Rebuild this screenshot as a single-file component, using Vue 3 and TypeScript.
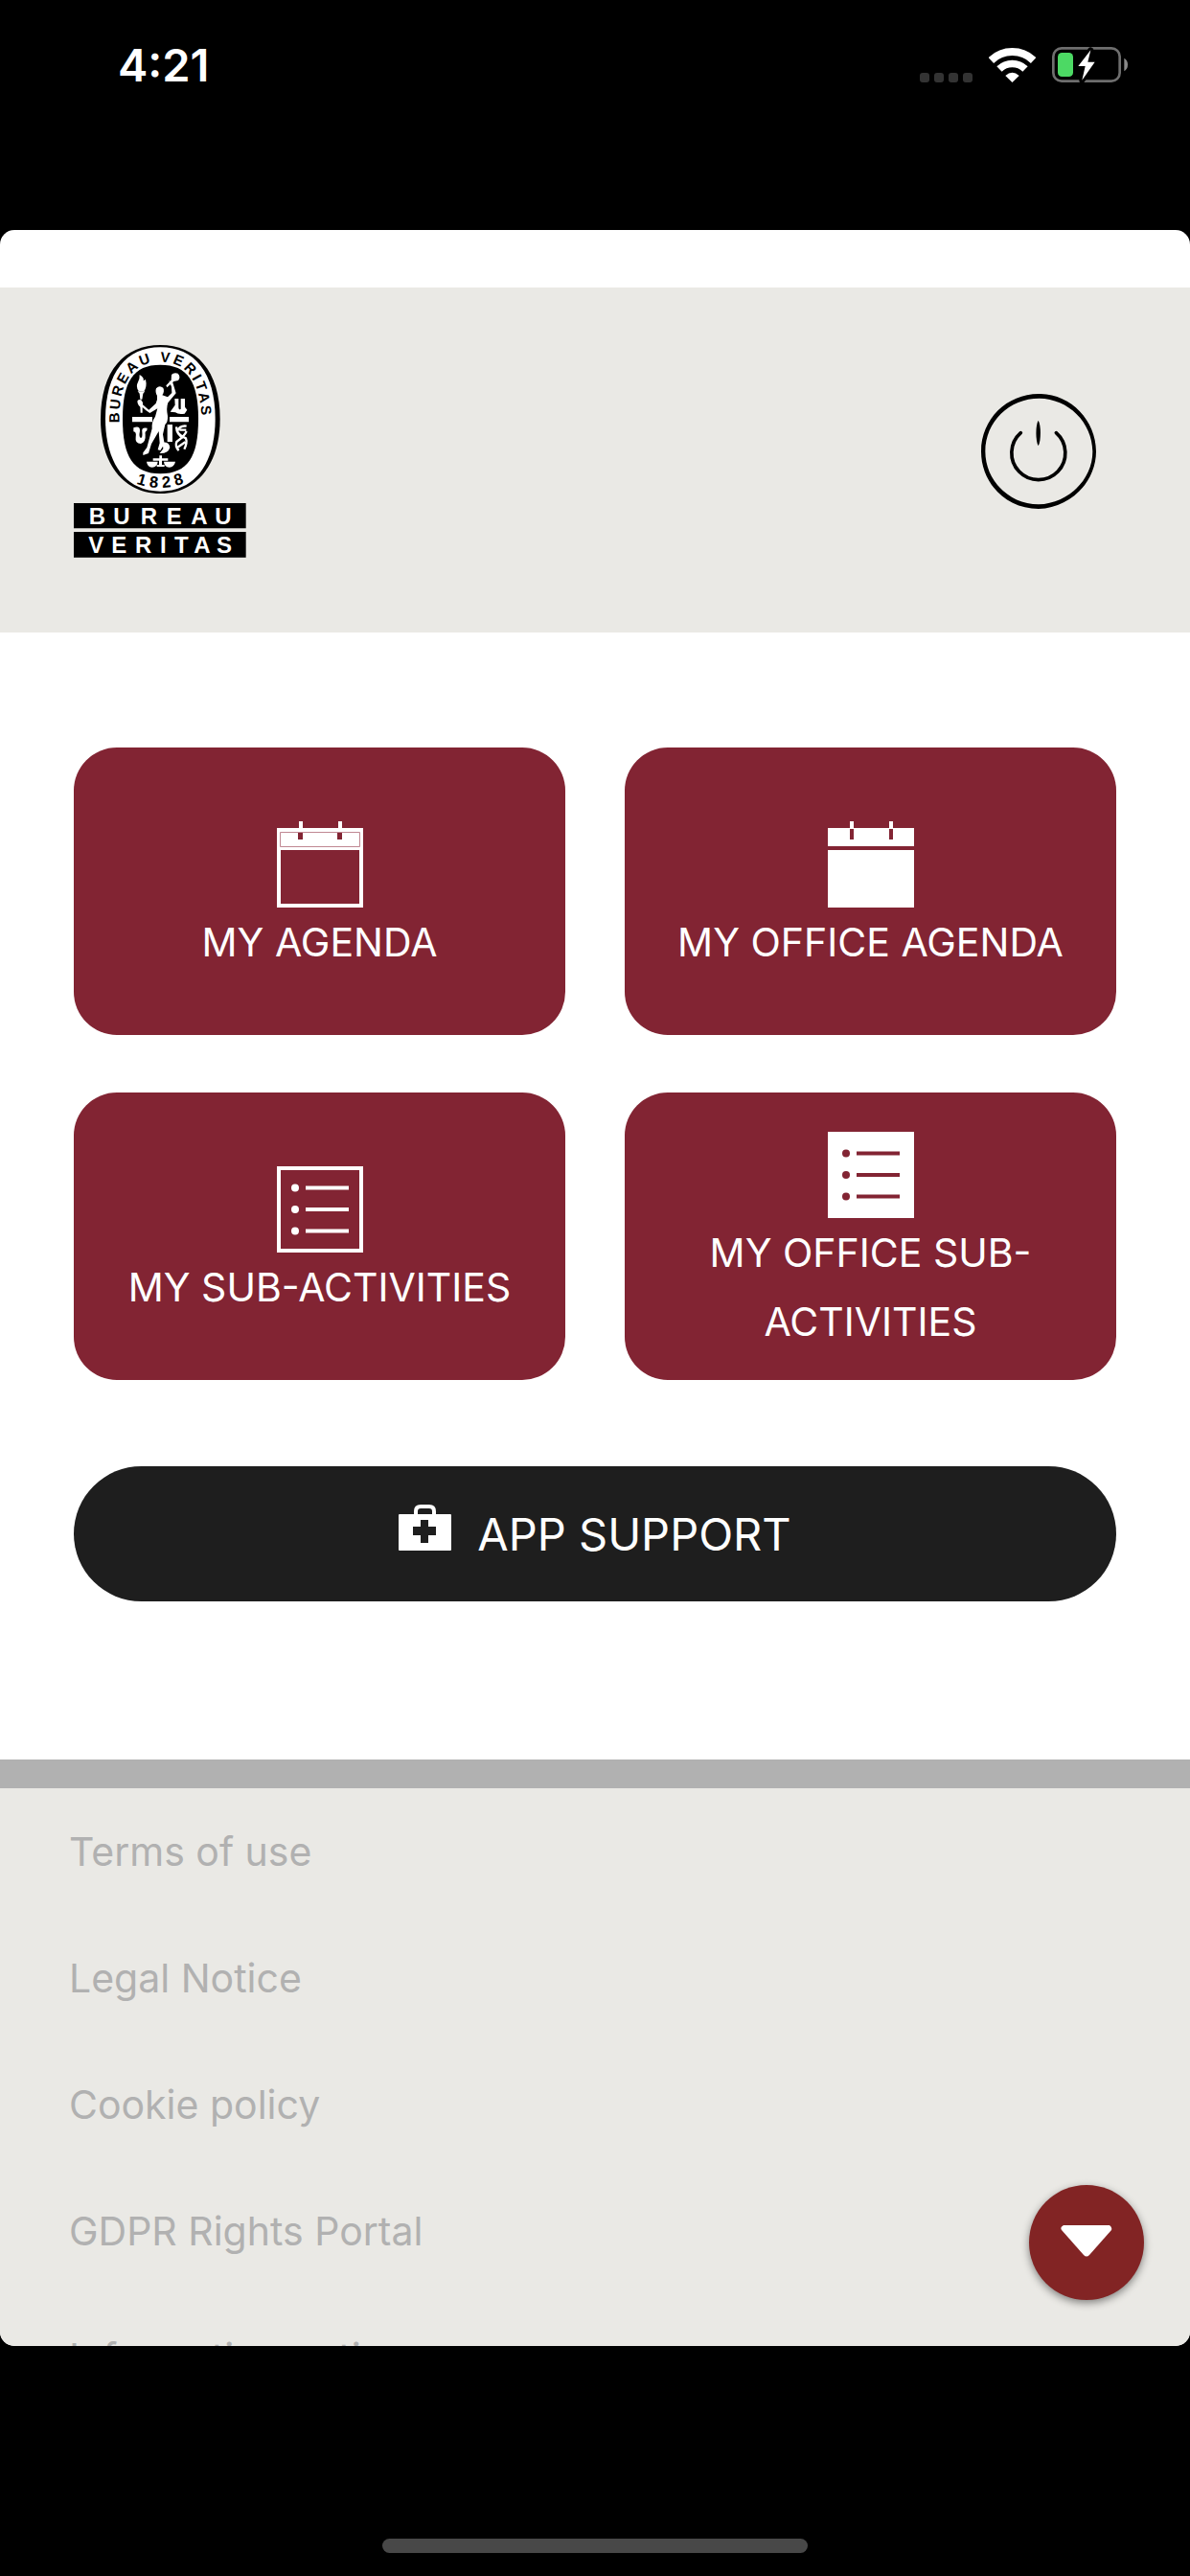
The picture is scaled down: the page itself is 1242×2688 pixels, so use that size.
<script setup lang="ts">
type Icon = 'calendar' | 'calendar-solid' | 'list' | 'list-solid'

interface Tile {
  label: string
  icon: Icon
}

const tiles: Tile[] = [
  { label: 'MY AGENDA', icon: 'calendar' },
  { label: 'MY OFFICE AGENDA', icon: 'calendar-solid' },
  { label: 'MY SUB-ACTIVITIES', icon: 'list' },
  { label: 'MY OFFICE SUB-ACTIVITIES', icon: 'list-solid' },
]

const links: string[] = [
  'Terms of use',
  'Legal Notice',
  'Cookie policy',
  'GDPR Rights Portal',
  'Information notice',
]
</script>

<template>
  <div class="screen">
    <div class="status">
      <time class="clock">4:21</time>
      <div class="indicators">
        <span class="dots"><i v-for="n in 4" :key="n"></i></span>
        <svg class="wifi" viewBox="276 87 147 108" aria-label="Wi-Fi">
          <g fill="none" stroke="#fff">
            <path d="M283 126 A96 96 0 0 1 416 126" stroke-width="24" />
            <path d="M309 153 A58 58 0 0 1 390 153" stroke-width="23" />
          </g>
          <path d="M349.500 195 L328 174 Q349.500 154 371 174 Z" fill="#fff" />
        </svg>
        <svg class="battery" viewBox="474 87 237 111" aria-label="Battery charging">
          <rect x="478" y="91" width="208" height="103" rx="26" fill="none" stroke="#6e6e6e" stroke-width="8" />
          <path d="M700 122 Q711 128 711 142 Q711 157 700 163 Z" fill="#8a8a8a" />
          <rect x="492" y="105" width="48" height="75" rx="13" fill="#4cd964" />
          <path
            d="M595 97 L556 147 H578 L568 191 L608 134 H586 Z"
            fill="#fff" stroke="#000" stroke-width="18" paint-order="stroke" stroke-linejoin="round"
          />
        </svg>
      </div>
    </div>

    <div class="sheet">
      <div class="scroller">
        <header class="header">
          <svg class="logo" viewBox="51 60 540 666" role="img" aria-label="Bureau Veritas">
            <path d="M322 60 C434 60 509 140 509 292 C509 430 439 525 322 525 C205 525 135 430 135 292 C135 140 210 60 322 60Z" />
            <path fill="#fff" d="M322 67 C428 67 494 145 494 292 C494 425 434 518 322 518 C210 518 150 425 150 292 C150 145 216 67 322 67Z" />
            <path d="M322 122 C408 122 441 175 441 292 C441 410 408 463 322 463 C237 463 204 410 204 292 C204 175 237 122 322 122Z" />
            <defs>
              <path id="ring-top" d="M194 304 C190 200 222 113 322 113 C422 113 455 200 451 330" />
              <path id="ring-bottom" d="M246 494 Q325 522 412 488" />
            </defs>
            <g font-family="'Liberation Sans', Arial, sans-serif" font-weight="700" font-size="45">
              <text dx="0 8 8 8 8 8 8 8 8 8 8 8 8 7"><textPath href="#ring-top">BUREAU VERITAS</textPath></text>
              <text font-size="50" dx="0 14 14 14"><textPath href="#ring-bottom">1828</textPath></text>
            </g>
            <g fill="#fff">
              <path d="M234 285H297V301H234Z M351 285H411V301H351Z M344 309H360V363H344Z" />
              <path d="M254 204 Q244 190 252 176 Q258 168 257 153 Q272 161 269 172 L276 168 Q281 190 271 205Z" />
              <path d="M251 205H274L268 212 L265 230H259L257 212Z M259 250H266V272H260Z" />
              <path d="M250 236 Q252 228 262 232 Q269 240 267 247 L286 263 L308 243 Q314 229 312 219 Q305 207 309 196 Q319 184 331 194 Q336 205 328 217 L345 223 L358 210 L357 191 L349 172 L361 178 L371 211 L346 241 Q340 258 345 282 Q346 302 337 309 L330 340 L335 370 L322 390 L314 388 L320 367 L317 330 L294 370 L285 399 L268 405 L268 397 L280 381 L296 322 Q294 301 306 284 L313 259 L289 273 Q277 266 267 256 Q251 253 250 236Z" />
              <path d="M357 153 Q363 146 377 149 Q387 160 378 171 L364 174 L343 193 L340 187 L356 170Z" />
              <path d="M367 228H379V256 Q380 265 386 260 V228H399V254 L406 263 L398 275 Q379 279 369 271 L353 269 L368 248Z" />
              <path d="M238 319 Q259 311 258 329 Q254 348 261 351 Q267 350 265 332 Q262 316 281 320 L280 328 Q273 331 275 340 Q277 365 261 369 Q242 369 245 348 Q248 332 238 331Z" />
              <path d="M329 365 Q350 363 352 381 Q347 400 320 399 L331 385Z" />
              <path d="M319 406H327V415H346V422H327V435H335V441H311V435H318V422H299V415H319Z M279 425H314 Q313 442 296 443 Q281 441 279 425Z M333 425H369 Q366 442 350 443 Q334 441 333 425Z" />
            </g>
            <g fill="none" stroke="#fff" stroke-width="7">
              <path d="M404 314 Q383 311 375 330 Q382 343 402 352 Q407 366 397 386 M372 316 Q373 340 394 350 M404 330 Q397 346 373 363 Q367 379 380 390 M382 326H403 M374 382L400 364" />
            </g>
            <path d="M51 555H590V634H51Z M51 645H590V725H51Z" />
            <g fill="#fff" font-family="'Liberation Sans', Arial, sans-serif" font-weight="700" font-size="72">
              <text x="98 175 260 341 418 493" y="620">BUREAU</text>
              <text x="97 169 243 321 366 427 498" y="710">VERITAS</text>
            </g>
          </svg>
          <button class="power" type="button" aria-label="Log out">
            <svg viewBox="72 63 360 360">
              <path
                fill-rule="evenodd"
                d="M252 63 C350 61 432 145 432 243 C432 340 350 420 252 423 C150 423 72 342 72 243 C72 142 153 63 252 63Z M254 77 C160 77 85 150 85 243 C85 334 160 409 252 409 C340 407 421 335 421 243 C420 152 345 78 254 77Z"
              />
              <path d="M196 185 A84 84 0 1 0 307 185" fill="none" stroke="#000" stroke-width="11" stroke-linecap="round" />
              <path d="M251 146 C260 160 260 210 251 226 C242 210 242 160 251 146Z" />
            </svg>
          </button>
        </header>

        <main class="main">
          <div class="tiles">
            <button v-for="tile in tiles" :key="tile.label" class="tile" type="button">
              <svg class="tile-icon" viewBox="0 0 90 90" aria-hidden="true">
                <template v-if="tile.icon === 'calendar'">
                  <path fill="#fff" d="M0 7H90V90H0Z" />
                  <path fill="#822433" d="M4 30H86V86H4Z M22 11H27V19H22Z M63 11H68V19H63Z" />
                  <path fill="none" stroke="#c08792" d="M3.500 11.500H86.500V26.500H3.500Z" />
                  <path fill="#fff" d="M23 0H27V9H23Z M64 0H68V9H64Z" />
                </template>
                <template v-else-if="tile.icon === 'calendar-solid'">
                  <path fill="#fff" d="M0 7H90V26H0Z M0 30H90V90H0Z M23 0H27V7H23Z M64 0H68V7H64Z" />
                  <path fill="#822433" d="M23 8H27V19H23Z M64 8H68V19H64Z" />
                </template>
                <template v-else>
                  <path v-if="tile.icon === 'list'" fill="none" stroke="#fff" stroke-width="4" d="M2 2H88V88H2Z" />
                  <path v-else fill="#fff" d="M0 0H90V90H0Z" />
                  <g :fill="tile.icon === 'list' ? '#fff' : '#822433'">
                    <circle cx="19" cy="22.500" r="4" />
                    <circle cx="19" cy="45" r="4" />
                    <circle cx="19" cy="67.500" r="4" />
                    <path d="M30 20.500H75V24.500H30Z M30 43H75V47H30Z M30 65.500H75V69.500H30Z" />
                  </g>
                </template>
              </svg>
              <span>{{ tile.label }}</span>
            </button>
          </div>

          <button class="support" type="button">
            <svg viewBox="0 0 55 48" aria-hidden="true">
              <path
                fill="#fff" fill-rule="evenodd"
                d="M1 10H16V7Q16 0 23 0H32Q39 0 39 7V10H54Q55 10 55 11V47Q55 48 54 48H1Q0 48 0 47V11Q0 10 1 10Z M20 10H35V7Q35 4 32 4H23Q20 4 20 7Z M23 16V23H15V32H23V40H31V32H39V23H31V16Z"
              />
            </svg>
            <span>APP SUPPORT</span>
          </button>
        </main>

        <footer class="footer">
          <a v-for="link in links" :key="link" href="#">{{ link }}</a>
        </footer>
      </div>

      <button class="fab" type="button" aria-label="Scroll down">
        <svg viewBox="0 0 54 33" aria-hidden="true">
          <path fill="#fff" d="M3 0H51Q54 2 53 5L30 31Q27 34 24 31L1 5Q-1 2 3 0Z" />
        </svg>
      </button>
    </div>

    <div class="home-area"><span class="home-bar"></span></div>
  </div>
</template>

<style>
body {
  background: #000;
}
</style>

<style scoped>
.screen {
  display: flex;
  flex-direction: column;
  height: 100vh;
  background: #000;
  font-family: Inter, Roboto, "Liberation Sans", sans-serif;
}

.screen * {
  box-sizing: border-box;
}

button {
  margin: 0;
  border: 0;
  padding: 0;
  background: none;
  font: inherit;
  cursor: pointer;
}

svg {
  display: block;
  flex: none;
}

.status {
  display: flex;
  flex: none;
  align-items: flex-start;
  justify-content: space-between;
  height: 240px;
  padding: 49px 65px 0 123px;
  color: #fff;
}

.clock {
  font-size: 47px;
  font-weight: 600;
  line-height: 38px;
}

.indicators {
  display: flex;
  align-items: flex-end;
}

.dots {
  display: flex;
  gap: 5px;
  margin-right: 17px;
}

.dots i {
  width: 10px;
  height: 10px;
  border-radius: 3px;
  background: #333;
}

.wifi {
  width: 49px;
  height: 36px;
  margin-right: 17px;
}

.battery {
  width: 79px;
  height: 37px;
}

.sheet {
  position: relative;
  flex: 1;
  min-height: 0;
  overflow: hidden;
  border-radius: 15px;
  background: #fff;
}

.scroller {
  height: 100%;
  padding-top: 60px;
  overflow-y: auto;
  scrollbar-width: none;
}

.header {
  display: flex;
  align-items: center;
  justify-content: space-between;
  padding: 60px 98px 78px 77px;
  background: #eae9e5;
}

.logo {
  width: 180px;
  height: 222px;
}

.power,
.power svg {
  width: 120px;
  height: 120px;
}

.main {
  padding: 120px 77px 165px;
}

.tiles {
  display: grid;
  grid-template-columns: 1fr 1fr;
  gap: 60px 62px;
}

.tile {
  display: flex;
  flex-direction: column;
  align-items: center;
  justify-content: center;
  min-height: 300px;
  padding: 16px 48px 0;
  border-radius: 45px;
  background: #822433;
  color: #fff;
  font-size: 41px;
  line-height: 72px;
}

.tile-icon {
  width: 90px;
  height: 90px;
}

.support {
  display: flex;
  align-items: center;
  justify-content: center;
  gap: 27px;
  width: 100%;
  height: 141px;
  margin-top: 90px;
  border-radius: 71px;
  background: #1e1e1e;
  color: #fff;
  font-size: 47px;
}

.support svg {
  width: 55px;
  height: 48px;
  margin-bottom: 14px;
}

.footer {
  display: flex;
  flex-direction: column;
  align-items: flex-start;
  gap: 60px;
  padding: 30px 72px;
  border-top: 30px solid #b1b1b1;
  background: #eae9e5;
}

.footer a {
  color: #b1b1b1;
  font-size: 41px;
  line-height: 72px;
  text-decoration: none;
}

.fab {
  position: absolute;
  right: 48px;
  bottom: 48px;
  display: flex;
  align-items: center;
  justify-content: center;
  width: 120px;
  height: 120px;
  padding-bottom: 4px;
  border-radius: 50%;
  background: #822424;
  box-shadow: 0 3px 8px rgba(0, 0, 0, 0.45);
}

.fab svg {
  width: 54px;
  height: 33px;
}

.home-area {
  display: flex;
  flex: none;
  align-items: flex-end;
  justify-content: center;
  height: 240px;
  padding-bottom: 24px;
}

.home-bar {
  width: 444px;
  height: 15px;
  border-radius: 8px;
  background: #484848;
}
</style>
